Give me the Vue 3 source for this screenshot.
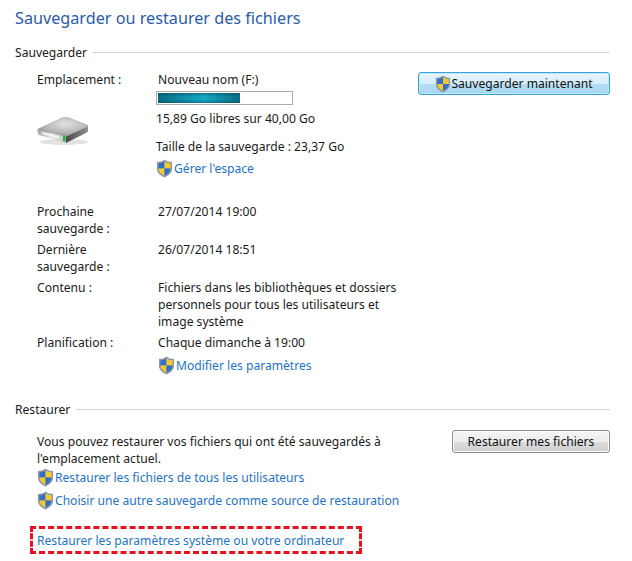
<template>
  <div class="page">
    <h1 class="title">Sauvegarder ou restaurer des fichiers</h1>

    <!-- Sauvegarder -->
    <div class="section-head"><span>Sauvegarder</span><i></i></div>
    <div class="backup">
      <div class="details">
        <div class="location">
          <div class="location-left">
            <div class="label">Emplacement :</div>
            <svg class="drive" width="54" height="30" viewBox="0 0 54 30">
              <defs>
                <radialGradient id="driveTop" cx="0.55" cy="0.35" r="0.7">
                  <stop offset="0" stop-color="#e2e2e2" />
                  <stop offset="0.55" stop-color="#bcbcbc" />
                  <stop offset="1" stop-color="#8f8f8f" />
                </radialGradient>
                <linearGradient id="driveFront" x1="0" y1="0" x2="1" y2="0">
                  <stop offset="0" stop-color="#a8a8a8" />
                  <stop offset="0.5" stop-color="#e8e8e8" />
                  <stop offset="1" stop-color="#c2c2c2" />
                </linearGradient>
                <linearGradient id="driveSide" x1="0" y1="0" x2="1" y2="0">
                  <stop offset="0" stop-color="#4a4a4a" />
                  <stop offset="1" stop-color="#8e8e8e" />
                </linearGradient>
              </defs>
              <ellipse cx="28" cy="26" rx="24" ry="3" fill="#e2e2e2" />
              <path d="M2 13 L26 2 Q29 .5 33 2 L51 9 Q53 10 51 11 L31 20 Q29 21 26 20 L3 15 Q1 14 2 13Z" fill="url(#driveTop)" stroke="#9a9a9a" stroke-width="0.5" />
              <path d="M1.5 14 L30 20.5 L30 27 L3 19 Q1.5 18 1.5 14Z" fill="url(#driveFront)" />
              <path d="M30 20.5 L52 10.5 L52 15 Q52 16 50 17 L30 27Z" fill="url(#driveSide)" />
              <path d="M6 17 L23 21.5" stroke="#f8f8f8" stroke-width="1.5" />
              <path d="M27 19.5 L29.5 20 L29.5 25.5 L27 25Z" fill="#27b03a" />
            </svg>
          </div>
          <div class="location-right">
            <div class="line">Nouveau nom (F:)</div>
            <div class="bar"><div class="bar-fill" :style="{ width: usedPct + '%' }"></div></div>
            <div class="line free">15,89 Go libres sur 40,00 Go</div>
            <div class="line size">Taille de la sauvegarde : 23,37 Go</div>
            <a class="link with-shield manage"><svg class="shield" viewBox="0 0 18 20"><use href="#uac" /></svg>Gérer l'espace</a>
          </div>
        </div>

        <dl class="rows">
          <template v-for="row in rows" :key="row.label">
            <dt>{{ row.label }}</dt>
            <dd>{{ row.value }}</dd>
          </template>
          <dt></dt>
          <dd class="settings"><a class="link with-shield"><svg class="shield" viewBox="0 0 18 20"><use href="#uac" /></svg>Modifier les paramètres</a></dd>
        </dl>
      </div>
      <button class="btn btn-active"><svg class="shield" viewBox="0 0 18 20"><use href="#uac" /></svg>Sauvegarder maintenant</button>
    </div>

    <!-- Restaurer -->
    <div class="section-head restore-head"><span>Restaurer</span><i></i></div>
    <div class="restore">
      <div class="restore-text">
        <p>Vous pouvez restaurer vos fichiers qui ont été sauvegardés à l'emplacement actuel.</p>
        <a class="link with-shield"><svg class="shield" viewBox="0 0 18 20"><use href="#uac" /></svg>Restaurer les fichiers de tous les utilisateurs</a>
        <a class="link with-shield second"><svg class="shield" viewBox="0 0 18 20"><use href="#uac" /></svg>Choisir une autre sauvegarde comme source de restauration</a>
      </div>
      <button class="btn btn-plain">Restaurer mes fichiers</button>
    </div>
    <div class="highlight"><a class="link">Restaurer les paramètres système ou votre ordinateur</a></div>

    <!-- shield shared by all links -->
    <svg width="0" height="0" class="defs">
      <symbol id="uac" viewBox="0 0 18 20">
        <path d="M9 .5 C11.5 2.5 14 3 17 3 V10 C17 14.5 13.5 17.5 9 19.5 C4.5 17.5 1 14.5 1 10 V3 C4 3 6.5 2.5 9 .5Z" fill="#8d98a8" />
        <path d="M9 2.5 V10 H2.6 V4.4 C5 4.3 7 3.8 9 2.5Z" fill="#2f6fc4" />
        <path d="M9 2.5 C11 3.8 13 4.3 15.4 4.4 V10 H9Z" fill="#f5c92e" />
        <path d="M2.6 10 H9 V17.6 C5.5 16 2.8 13.6 2.6 10Z" fill="#f5c92e" />
        <path d="M9 10 H15.4 C15.2 13.6 12.5 16 9 17.6Z" fill="#2f6fc4" />
      </symbol>
    </svg>
  </div>
</template>

<script setup>
const usedPct = 61.6

const rows = [
  { label: 'Prochaine sauvegarde :', value: '27/07/2014 19:00' },
  { label: 'Dernière sauvegarde :', value: '26/07/2014 18:51' },
  { label: 'Contenu :', value: 'Fichiers dans les bibliothèques et dossiers personnels pour tous les utilisateurs et image système' },
  { label: 'Planification :', value: 'Chaque dimanche à 19:00' }
]
</script>

<style>
html, body {
  margin: 0;
  background: #fff;
}
</style>

<style scoped>
.page {
  width: 632px;
  height: 561px;
  box-sizing: border-box;
  padding: 8px 22px 0 15px;
  overflow: hidden;
  font-family: "Noto Sans", "Open Sans", sans-serif;
  font-size: 12.1px;
  line-height: 17px;
  color: #1a1a1a;
}

.title {
  margin: 0;
  font-size: 16.2px;
  line-height: 21px;
  font-weight: 400;
  color: #2a5bab;
}

.section-head {
  display: flex;
  align-items: center;
  gap: 6px;
  margin-top: 15px;
}

.section-head i {
  flex: 1;
  height: 1px;
  background: #d4d4d4;
}

.restore-head {
  margin-top: 26px;
}

.backup {
  display: flex;
  justify-content: space-between;
  align-items: flex-start;
  padding-left: 22px;
}

.details {
  width: 380px;
}

.location {
  display: flex;
  margin-top: 10px;
}

.location-left {
  width: 121px;
  flex-shrink: 0;
}

.drive {
  display: block;
  margin: 28px 0 0 -1px;
}

.bar {
  box-sizing: border-box;
  width: 137px;
  height: 14px;
  margin: 3px 0 0 -2px;
  padding: 1px;
  border: 1px solid #ababab;
  background: #fff;
}

.bar-fill {
  height: 100%;
  background:
    linear-gradient(rgba(0, 60, 80, 0.45), rgba(0, 60, 80, 0) 35%, rgba(0, 60, 80, 0) 65%, rgba(0, 60, 80, 0.4)),
    linear-gradient(90deg, #0a6b84, #14a8c2 55%, #0a6e86);
}

.free {
  margin: 5px 0 0 -2px;
}

.size {
  margin: 11px 0 0 -2px;
}

.link {
  color: #2272cc;
  display: flex;
  align-items: center;
}

.with-shield .shield {
  margin-right: 1px;
}

.manage {
  margin: 4px 0 0 -2px;
}

.shield {
  width: 17px;
  height: 19px;
  flex-shrink: 0;
}

.rows {
  display: grid;
  grid-template-columns: 121px 1fr;
  row-gap: 4px;
  margin: 25px 0 0;
}

.rows dt {
  width: 90px;
}

.rows dd {
  margin: 0;
  width: 250px;
}

.rows .settings {
  width: auto;
  margin-top: 1px;
}

.btn {
  display: flex;
  align-items: center;
  justify-content: center;
  height: 23px;
  padding: 0;
  font: inherit;
  color: #111;
  border-radius: 3px;
}

.btn-active {
  width: 192px;
  margin-top: 11px;
  border: 1px solid #3ba3dc;
  background: linear-gradient(#e9f6fd 0%, #d5eefb 50%, #b5def5 52%, #a8d6f0 100%);
  box-shadow: inset 0 0 0 1px #bfe6fa;
}

.btn-active .shield {
  width: 16px;
  height: 18px;
}

.btn-plain {
  width: 158px;
  border: 1px solid #8c8c8c;
  background: linear-gradient(#f5f5f5 0%, #ececec 50%, #dcdcdc 52%, #cfcfcf 100%);
  box-shadow: inset 0 0 0 1px #fcfcfc;
}

.restore {
  display: flex;
  justify-content: space-between;
  align-items: flex-start;
  padding-left: 22px;
  margin-top: 12px;
}

.restore-text {
  width: 370px;
  padding-top: 3px;
}

.restore-text p {
  margin: 0;
}

.restore-text .link {
  margin-top: 1px;
}

.restore-text .second {
  margin-top: 4px;
}

.highlight {
  width: 332px;
  height: 28px;
  box-sizing: border-box;
  margin: 16px 0 0 15px;
  padding-left: 4px;
  display: flex;
  align-items: center;
  border: 3px dashed #e8101c;
}

.defs {
  position: absolute;
}
</style>
